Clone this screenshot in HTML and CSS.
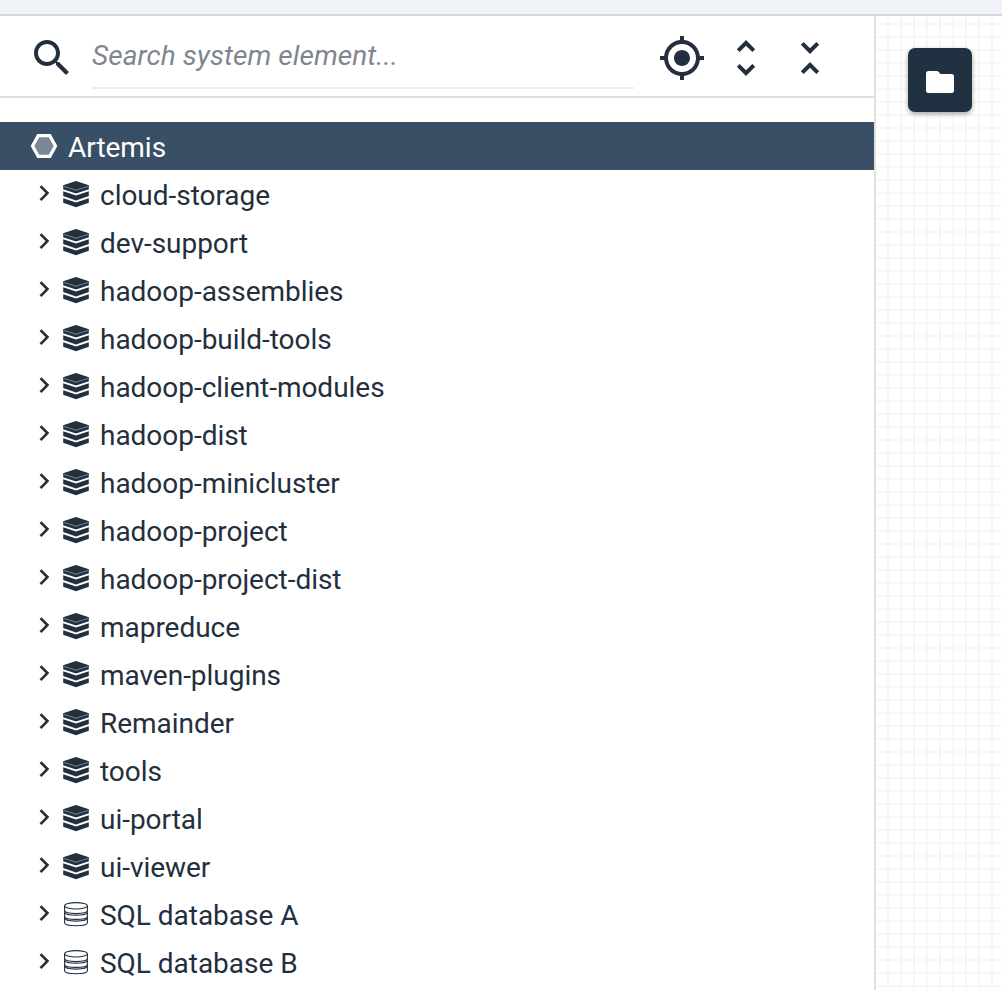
FILE: index.html
```html
<!DOCTYPE html>
<html lang="en">
<head>
<meta charset="utf-8">
<title>System explorer</title>
<link rel="stylesheet" href="styles.css">
</head>
<body>
<svg class="defs" aria-hidden="true">
  <symbol id="chevron" viewBox="0 0 16 24"><path d="M4.5 4.1 11.4 11.1 4.5 18.1" fill="none" stroke="currentColor" stroke-width="2.7"/></symbol>
  <symbol id="module" viewBox="0 0 28 28">
    <path fill="currentColor" d="M14 .9 26.8 5.2V9.3L14 13.6 1.2 9.3V5.2zM1.2 11.3 14 15.6l12.8-4.3v4.7L14 20.4 1.2 16zM1.2 18.2 14 22.5l12.8-4.3v4.6L14 27.2 1.2 22.8z"/>
    <path d="M2 6.4 14 10.2 26 6.4" fill="none" stroke="#98a4ad" stroke-width=".7"/>
  </symbol>
  <symbol id="database" viewBox="0 0 28 28">
    <g fill="none" stroke="currentColor" stroke-width="1.1">
      <ellipse cx="14" cy="5.8" rx="11.4" ry="3.2"/>
      <path d="M2.6 5.8v17c0 4 22.8 4 22.8 0v-17M2.6 10.6c0 4 22.8 4 22.8 0M2.6 12.3c0 4 22.8 4 22.8 0M2.6 16.4c0 4 22.8 4 22.8 0M2.6 18.1c0 4 22.8 4 22.8 0"/>
    </g>
  </symbol>
</svg>
<div class="app">
  <div class="topbar"></div>
  <div class="workspace">
    <aside class="sidebar">
      <div class="toolbar">
        <svg class="tool-icon" viewBox="0 0 24 24"><path d="M15.5 14h-.79l-.28-.27C15.41 12.59 16 11.11 16 9.5 16 5.91 13.09 3 9.5 3S3 5.91 3 9.5 5.91 16 9.5 16c1.61 0 3.09-.59 4.23-1.57l.27.28v.79l5 4.99L20.49 19l-4.99-5zm-6 0C7.01 14 5 11.99 5 9.5S7.01 5 9.5 5 14 7.01 14 9.5 11.99 14 9.5 14z"/></svg>
        <input class="search" type="text" placeholder="Search system element...">
        <div class="actions">
          <svg class="tool-icon" viewBox="0 0 24 24"><path d="M12 8c-2.21 0-4 1.79-4 4s1.79 4 4 4 4-1.79 4-4-1.79-4-4-4zm8.94 3c-.46-4.17-3.77-7.48-7.94-7.94V1h-2v2.06C6.83 3.52 3.52 6.83 3.06 11H1v2h2.06c.46 4.17 3.77 7.48 7.94 7.94V23h2v-2.06c4.17-.46 7.48-3.77 7.94-7.94H23v-2h-2.06zM12 19c-3.87 0-7-3.13-7-7s3.13-7 7-7 7 3.13 7 7-3.13 7-7 7z"/></svg>
          <svg class="tool-icon" viewBox="0 0 24 24"><path d="M12 5.83 15.17 9l1.41-1.41L12 3 7.41 7.59 8.83 9 12 5.83zm0 12.34L8.83 15l-1.41 1.41L12 21l4.59-4.59L15.17 15 12 18.17z"/></svg>
          <svg class="tool-icon" viewBox="0 0 24 24"><path d="M7.41 18.59 8.83 20 12 16.83 15.17 20l1.41-1.41L12 14l-4.59 4.59zm9.18-13.18L15.17 4 12 7.17 8.83 4 7.41 5.41 12 10l4.59-4.59z"/></svg>
        </div>
      </div>
      <div class="tree">
        <div class="row root"><svg class="hexagon" viewBox="0 0 28 28"><path d="M8.2 3.7h11.6L25.5 14l-5.7 10.3H8.2L2.5 14z" fill="#7b8796" stroke="#fff" stroke-width="3.2"/></svg><span>Artemis</span></div>
        <div class="row"><svg class="chevron"><use href="#chevron"/></svg><svg class="type"><use href="#module"/></svg><span>cloud-storage</span></div>
        <div class="row"><svg class="chevron"><use href="#chevron"/></svg><svg class="type"><use href="#module"/></svg><span>dev-support</span></div>
        <div class="row"><svg class="chevron"><use href="#chevron"/></svg><svg class="type"><use href="#module"/></svg><span>hadoop-assemblies</span></div>
        <div class="row"><svg class="chevron"><use href="#chevron"/></svg><svg class="type"><use href="#module"/></svg><span>hadoop-build-tools</span></div>
        <div class="row"><svg class="chevron"><use href="#chevron"/></svg><svg class="type"><use href="#module"/></svg><span>hadoop-client-modules</span></div>
        <div class="row"><svg class="chevron"><use href="#chevron"/></svg><svg class="type"><use href="#module"/></svg><span>hadoop-dist</span></div>
        <div class="row"><svg class="chevron"><use href="#chevron"/></svg><svg class="type"><use href="#module"/></svg><span>hadoop-minicluster</span></div>
        <div class="row"><svg class="chevron"><use href="#chevron"/></svg><svg class="type"><use href="#module"/></svg><span>hadoop-project</span></div>
        <div class="row"><svg class="chevron"><use href="#chevron"/></svg><svg class="type"><use href="#module"/></svg><span>hadoop-project-dist</span></div>
        <div class="row"><svg class="chevron"><use href="#chevron"/></svg><svg class="type"><use href="#module"/></svg><span>mapreduce</span></div>
        <div class="row"><svg class="chevron"><use href="#chevron"/></svg><svg class="type"><use href="#module"/></svg><span>maven-plugins</span></div>
        <div class="row"><svg class="chevron"><use href="#chevron"/></svg><svg class="type"><use href="#module"/></svg><span>Remainder</span></div>
        <div class="row"><svg class="chevron"><use href="#chevron"/></svg><svg class="type"><use href="#module"/></svg><span>tools</span></div>
        <div class="row"><svg class="chevron"><use href="#chevron"/></svg><svg class="type"><use href="#module"/></svg><span>ui-portal</span></div>
        <div class="row"><svg class="chevron"><use href="#chevron"/></svg><svg class="type"><use href="#module"/></svg><span>ui-viewer</span></div>
        <div class="row"><svg class="chevron"><use href="#chevron"/></svg><svg class="type"><use href="#database"/></svg><span>SQL database A</span></div>
        <div class="row"><svg class="chevron"><use href="#chevron"/></svg><svg class="type"><use href="#database"/></svg><span>SQL database B</span></div>
      </div>
    </aside>
    <main class="canvas">
      <button class="folder-button" aria-label="Open folder"><svg viewBox="0 0 28 22"><path d="M2.5 0h8.4q1 0 1.7.8L14.5 3H25.5a2.5 2.5 0 0 1 2.5 2.5v14a2.5 2.5 0 0 1-2.5 2.5H2.5a2.5 2.5 0 0 1-2.5-2.5v-17A2.5 2.5 0 0 1 2.5 0z" fill="#fff"/></svg></button>
    </main>
  </div>
</div>
</body>
</html>
```

FILE: styles.css
```css
* { box-sizing: border-box; }
body { margin: 0; font-family: Roboto, "Liberation Sans", sans-serif; color: #232f3e; }
svg { display: block; flex: none; }
.defs { display: none; }
.app { height: 990px; display: flex; flex-direction: column; overflow: hidden; background: #fff; }
.topbar { height: 16px; flex: none; background: #eff3f8; border-bottom: 2px solid #d3d5da; }
.workspace { flex: 1; min-height: 0; display: flex; }
.sidebar { width: 876px; flex: none; border-right: 2px solid #dfe0e0; }
.toolbar { height: 82px; padding: 0 40px 0 28px; display: flex; align-items: center; border-bottom: 2px solid #dedfe0; }
.tool-icon { width: 48px; height: 48px; fill: #232f3e; margin-top: 4px; }
.search { width: 542px; height: 66px; margin: 0 24px 0 16px; padding: 0; border: 0; border-bottom: 2px solid #ededee; outline: 0; background: transparent; font: italic 28px/40px Roboto, sans-serif; letter-spacing: .08px; color: #232f3e; }
.search::placeholder { color: #80858f; opacity: 1; }
.actions { display: flex; gap: 16px; }
.tree { padding-top: 24px; }
.row { height: 48px; padding-left: 36px; display: flex; align-items: center; font-size: 28px; line-height: 48px; letter-spacing: -.03px; white-space: nowrap; }
.row span { padding-top: 3px; }
.root { padding-left: 30px; background: #394f66; color: #fff; }
.hexagon { width: 28px; height: 28px; margin-right: 10px; }
.chevron { width: 16px; height: 24px; margin-right: 10px; }
.type { width: 28px; height: 28px; margin-right: 10px; }
.canvas {
  flex: 1;
  padding: 32px;
  background-color: #fff;
  background-image: linear-gradient(to right, #f6f8f8 2px, transparent 2px), linear-gradient(to bottom, #f6f8f8 2px, transparent 2px);
  background-size: 13px 13px;
  background-position: 11px 7px;
}
.folder-button { width: 64px; height: 64px; padding: 4px 0 0; border: 0; border-radius: 7px; background: #203241; display: flex; align-items: center; justify-content: center; box-shadow: 0 2px 5px rgba(0, 0, 0, .35); }
.folder-button svg { width: 28px; height: 22px; }
```
